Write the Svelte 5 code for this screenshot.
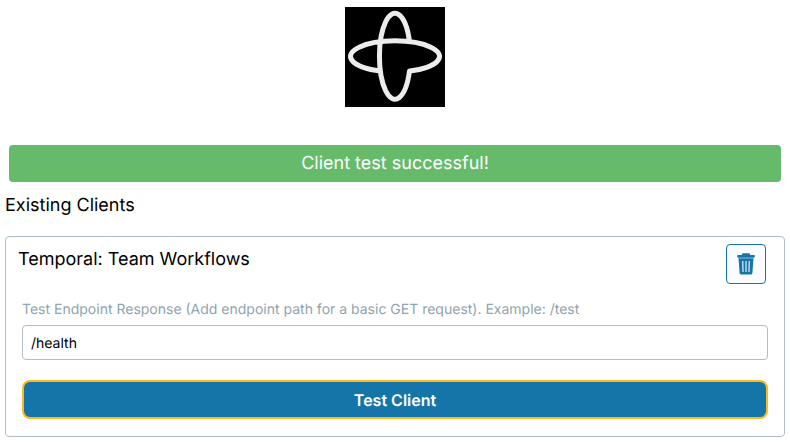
<script>
    let path = $state("/health");
</script>

<main class="page">
    <div class="logo">
        <svg width="100" height="100" viewBox="0 0 100 100" aria-label="Temporal logo">
            <rect width="100" height="100" fill="#000" />
            <path
                class="mark"
                fill="none"
                stroke="#ececec"
                stroke-width="5"
                stroke-linejoin="round"
                d="M64.500 34.500A15.500 43 0 1 0 64.500 64A44.500 15.500 0 1 0 35.500 64"
            />
        </svg>
    </div>

    <div class="alert">Client test successful!</div>

    <h2>Existing Clients</h2>

    <section class="card">
        <div class="card-head">
            <h3>Temporal: Team Workflows</h3>
            <button class="delete" aria-label="Delete client">
                <svg width="18" height="22" viewBox="0 0 18 22">
                    <path
                        fill="#1675a8"
                        fill-rule="evenodd"
                        d="M5.500 .3h7l.8 1.700h3.500c.6 0 1 .5 1 1.300s-.4 1.400-1 1.400H1.200c-.6 0-1-.6-1-1.400S.6 2 1.200 2h3.500zM1.500 5.300h15l-1.100 14.700q-.1 1.600-1.600 1.600H4.200q-1.500 0-1.600-1.600zM5.200 8l.3 11h1.100l-.3-11zM8.450 8v11h1.100V8zM11.700 8l-.3 11h1.100l.3-11z"
                    />
                </svg>
            </button>
        </div>

        <label for="endpoint">Test Endpoint Response (Add endpoint path for a basic GET request). Example: /test</label>
        <input id="endpoint" type="text" bind:value={path} />

        <button class="test">Test Client</button>
    </section>
</main>

<style>
    :global(body) {
        font-family: Inter, "Liberation Sans", sans-serif;
        color: #000;
        background: #fff;
        text-rendering: geometricPrecision;
    }

    .page {
        padding: 7px 5px 0;
    }

    .logo {
        display: flex;
        justify-content: center;
        height: 100px;
    }

    .mark {
        filter: blur(0.4px);
    }

    .alert {
        margin: 38px 4px 0;
        height: 37px;
        display: flex;
        align-items: center;
        justify-content: center;
        background: #66bb6a;
        border-radius: 4px;
        color: #fff;
        font-size: 18px;
    }

    h2 {
        margin: 14px 0 0;
        font-size: 18px;
        font-weight: 400;
        line-height: 20px;
    }

    .card {
        margin-top: 20px;
        height: 201px;
        box-sizing: border-box;
        border: 1px solid #b0bec5;
        border-radius: 4px;
        padding: 7px 16px 0;
    }

    .card-head {
        display: flex;
        justify-content: space-between;
        align-items: flex-start;
        padding-right: 2px;
    }

    h3 {
        margin: 5px 0 0 -4px;
        font-size: 18px;
        font-weight: 400;
        line-height: 22px;
    }

    .delete {
        width: 40px;
        height: 40px;
        padding: 0;
        display: flex;
        align-items: center;
        justify-content: center;
        background: #fafcff;
        border: 1px solid #1675a8;
        border-radius: 4px;
    }

    label {
        display: block;
        margin-top: 17px;
        font-size: 14px;
        line-height: 17px;
        color: #90a4ae;
    }

    input {
        display: block;
        box-sizing: border-box;
        width: 100%;
        height: 35px;
        margin-top: 7px;
        padding: 2px 8px 0;
        border: 1px solid #b0bec5;
        border-radius: 4px;
        font: 14px Inter, "Liberation Sans", sans-serif;
        text-rendering: geometricPrecision;
        color: #000;
    }

    .test {
        display: block;
        box-sizing: border-box;
        width: 100%;
        height: 39px;
        margin-top: 20px;
        background: #1675a8;
        border: 2px solid #ffb81f;
        border-radius: 8px;
        color: #fff;
        font: 600 16px Inter, "Liberation Sans", sans-serif;
        text-rendering: geometricPrecision;
    }
</style>
